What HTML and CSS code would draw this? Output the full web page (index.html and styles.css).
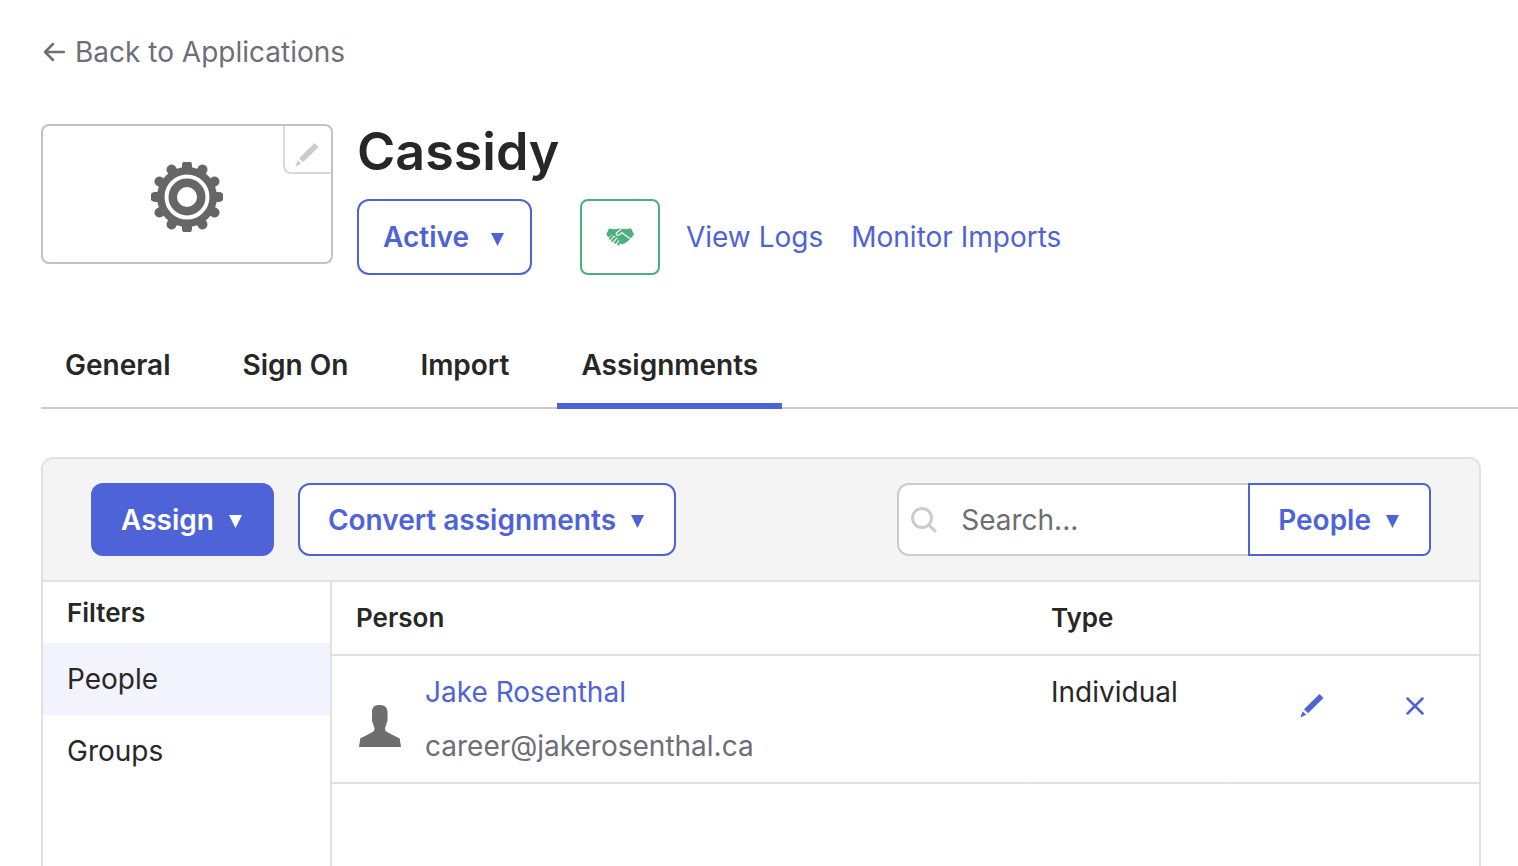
FILE: index.html
```html
<!DOCTYPE html>
<html lang="en">
<head>
<meta charset="utf-8">
<title>Cassidy – Assignments</title>
<link rel="stylesheet" href="styles.css">
</head>
<body>
<svg class="sprite" aria-hidden="true">
  <symbol id="caret" viewBox="0 0 14 14"><path d="M0 0h14L7 14z"/></symbol>
  <symbol id="pencil" viewBox="0 0 24 24"><path d="M19.500 0 23.500 4 8 19.300 4 15.300zM2.600 17.200l3.600 3.600L.4 23.400z"/></symbol>
</svg>
<main class="page">
  <a class="back" href="#">
    <svg class="back-icon" viewBox="0 0 22 20" aria-hidden="true"><path d="M21 10H2M10 2 2 10l8 8"/></svg>
    Back to Applications
  </a>

  <header class="app-header">
    <div class="logo">
      <svg class="gear" viewBox="-36 -35 72 70" aria-hidden="true">
        <circle r="30"/>
        <path class="teeth" d="M0-32V32M-32 0H32M-15.500-27.500 15.500 27.500M-27.500-15.500 27.500 15.500M-27.500 15.500 27.500-15.500M-15.500 27.500 15.500-27.500"/>
        <circle class="ring" r="20.500"/>
        <circle class="hole" r="10"/>
      </svg>
      <button class="logo-edit" type="button" aria-label="Edit logo"><svg class="pencil" aria-hidden="true"><use href="#pencil"/></svg></button>
    </div>
    <div class="app-info">
      <h1 class="title">Cassidy</h1>
      <div class="actions">
        <button class="btn btn-status" type="button">Active <svg class="caret" aria-hidden="true"><use href="#caret"/></svg></button>
        <button class="provision" type="button" aria-label="Provisioning">
          <svg class="handshake" viewBox="0 0 28 18" aria-hidden="true">
            <path d="M3 .5 8 1.300 14 .5l6 .8L25 .3l3 6.200-3 3.500c-.5 1.500-1.500 2-2.500 2-.3 1.500-1.300 2-2.500 2-.5 1.400-1.500 1.700-2.500 1.500-.7 1-1.800 1-2.500.5L12 11 8.500 8 5 7.500 2.500 9.500.2 6.500z"/>
            <path class="fingers" d="M5.800 8.600 4 10.700M8.800 9.800 6.300 12.900M11.500 11.800 9.200 14.700M14 13.800l-1.800 2.600"/>
            <path class="cut" d="M15.500.8 10.300 5c-.7 1.900 1.200 2.700 2.900 1.700L16 4.800l8.500 6.200"/>
          </svg>
        </button>
        <nav class="links">
          <a href="#">View Logs</a>
          <a href="#">Monitor Imports</a>
        </nav>
      </div>
    </div>
  </header>

  <nav class="tabs">
    <a class="tab" href="#">General</a>
    <a class="tab" href="#">Sign On</a>
    <a class="tab" href="#">Import</a>
    <a class="tab tab-active" href="#" aria-current="page">Assignments</a>
  </nav>

  <section class="panel">
    <div class="toolbar">
      <button class="btn btn-primary" type="button">Assign <svg class="caret" aria-hidden="true"><use href="#caret"/></svg></button>
      <button class="btn" type="button">Convert assignments <svg class="caret" aria-hidden="true"><use href="#caret"/></svg></button>
      <div class="search">
        <label class="search-box">
          <svg class="search-icon" viewBox="0 0 26 26" aria-hidden="true"><circle cx="11" cy="11" r="9.500"/><path d="m18 18 6 6"/></svg>
          <input class="search-input" type="text" placeholder="Search..." aria-label="Search">
        </label>
        <button class="btn btn-scope" type="button">People <svg class="caret" aria-hidden="true"><use href="#caret"/></svg></button>
      </div>
    </div>
    <div class="content">
      <aside class="filters">
        <h2 class="filters-title">Filters</h2>
        <a class="filter filter-active" href="#">People</a>
        <a class="filter" href="#">Groups</a>
      </aside>
      <div class="results">
        <table class="table">
          <colgroup><col><col class="col-type"><col class="col-actions"></colgroup>
          <thead>
            <tr><th scope="col">Person</th><th scope="col">Type</th><th></th></tr>
          </thead>
          <tbody>
            <tr>
              <td>
                <div class="person">
                  <svg class="avatar" viewBox="0 0 42 42" aria-hidden="true"><path d="M20.500 0c5.500 0 8.200 2.500 8 8v4.500c.4 1.500 0 4.500-1.200 6.500-.3 2.500-1.300 3-1.300 4.500 0 1.500.5 2.500 1.500 3.200L40.700 33.500 42 42H0l1.300-8.500L14 26.700c1-.7 1.500-1.700 1.500-3.200 0-1.500-1-2-1.300-4.500-1.200-2-1.600-5-1.200-6.500V8c-.2-5.500 2-8 7.500-8z"/></svg>
                  <div class="person-text">
                    <a href="#">Jake Rosenthal</a>
                    <span class="email">career@jakerosenthal.ca</span>
                  </div>
                </div>
              </td>
              <td>Individual</td>
              <td>
                <div class="row-actions">
                  <button class="icon-btn" type="button" aria-label="Edit"><svg class="pencil" aria-hidden="true"><use href="#pencil"/></svg></button>
                  <button class="icon-btn" type="button" aria-label="Remove"><svg class="cross" viewBox="0 0 18 18" aria-hidden="true"><path d="m1.500 1.500 15 15M16.500 1.500l-15 15"/></svg></button>
                </div>
              </td>
            </tr>
          </tbody>
        </table>
      </div>
    </div>
  </section>
</main>
</body>
</html>
```
FILE: styles.css
```css
:root {
  --blue: #4f63d9;
  --green: #4cb07c;
  --text: #272727;
  --muted: #6e6e78;
  --line: #e1e1e1;
}

* { box-sizing: border-box; }

body {
  margin: 0;
  background: #fff;
  color: var(--text);
  font: 400 28px/36px Inter, "Liberation Sans", sans-serif;
}

a { color: var(--blue); text-decoration: none; }
button { font: inherit; cursor: pointer; }
svg { display: block; flex: none; }
.sprite { display: none; }

.page {
  display: flex;
  flex-direction: column;
  min-height: 100vh;
  padding: 34px 0 0 41px;
}

.back {
  display: flex;
  align-items: center;
  align-self: flex-start;
  gap: 10px;
  padding-left: 2px;
  color: var(--muted);
}
.back-icon {
  width: 22px;
  height: 20px;
  fill: none;
  stroke: currentColor;
  stroke-width: 2.5;
  stroke-linecap: round;
  stroke-linejoin: round;
}

.app-header { display: flex; gap: 24px; margin-top: 54px; }

.logo {
  position: relative;
  display: grid;
  place-items: center;
  width: 292px;
  height: 140px;
  padding-top: 6px;
  border: 2px solid #c1c1c8;
  border-radius: 8px;
}
.gear { width: 72px; height: 70px; fill: #666; }
.teeth { stroke: #666; stroke-width: 10; stroke-linecap: round; }
.ring { fill: none; stroke: #fff; stroke-width: 4; }
.hole { fill: #fff; }
.logo-edit {
  position: absolute;
  top: 0;
  right: 0;
  display: grid;
  align-content: start;
  width: 48px;
  height: 48px;
  padding: 17px 0 0 10px;
  border: solid #d7d7dc;
  border-width: 0 0 2px 2px;
  border-radius: 0 0 0 8px;
  background: none;
  color: #cbcbcb;
}
.pencil { width: 24px; height: 24px; fill: currentColor; }

.title { margin: 0; font-size: 52px; font-weight: 600; line-height: 56px; }
.actions { display: flex; align-items: center; margin-top: 19px; }

.btn {
  display: flex;
  align-items: center;
  gap: 15px;
  height: 73px;
  padding: 0 30px 0 28px;
  border: 2px solid var(--blue);
  border-radius: 12px;
  background: #fff;
  color: var(--blue);
  font-weight: 600;
}
.btn-status { gap: 22px; height: 76px; padding: 0 26px 0 24px; }
.btn-primary { background: var(--blue); color: #fff; }
.caret { width: 13px; height: 13px; margin-top: 4px; fill: currentColor; }

.provision {
  display: grid;
  place-items: center;
  width: 80px;
  height: 76px;
  margin-left: 48px;
  padding: 0;
  border: 2px solid var(--green);
  border-radius: 8px;
  background: #fff;
}
.handshake { width: 28px; height: 18px; fill: var(--green); }
.fingers { fill: none; stroke: var(--green); stroke-width: 2.2; stroke-linecap: round; }
.cut { fill: none; stroke: #fff; stroke-width: 1.2; }
.links { display: flex; gap: 28px; margin-left: 26px; }

.tabs {
  display: flex;
  gap: 24px;
  margin-top: 60px;
  border-bottom: 2px solid #cbcbcb;
}
.tab {
  margin-bottom: -2px;
  padding: 12px 24px 20px;
  border-bottom: 6px solid transparent;
  color: var(--text);
  font-weight: 600;
}
.tab-active { border-color: var(--blue); }

.panel {
  display: flex;
  flex: 1;
  flex-direction: column;
  margin: 48px 37px 0 0;
  border: 2px solid var(--line);
  border-bottom: 0;
  border-radius: 12px 12px 0 0;
}
.toolbar {
  display: flex;
  gap: 24px;
  padding: 24px 48px;
  border-bottom: 2px solid var(--line);
  border-radius: 10px 10px 0 0;
  background: #f4f4f4;
}
.search { display: flex; margin-left: auto; }
.search-box {
  display: flex;
  align-items: center;
  gap: 24px;
  width: 351px;
  padding-left: 12px;
  border: 2px solid #cbcbcb;
  border-right: 0;
  border-radius: 12px 0 0 12px;
  background: #fff;
}
.search-icon { width: 26px; height: 26px; fill: none; stroke: #cbcbcb; stroke-width: 3; stroke-linecap: round; }
.search-input {
  flex: 1;
  min-width: 0;
  padding: 0;
  border: 0;
  outline: 0;
  background: none;
  color: var(--text);
  font: inherit;
}
.search-input::placeholder { color: #6e6e6e; opacity: 1; }
.btn-scope { border-radius: 0 8px 8px 0; }

.content { display: flex; flex: 1; }
.filters { flex: none; width: 289px; border-right: 2px solid var(--line); }
.filters-title { margin: 0; padding: 13px 24px 12px; font-size: 26px; font-weight: 600; line-height: 36px; }
.filter { display: block; padding: 18px 24px; color: var(--text); }
.filter-active { background: #f3f3fd; }

.results { flex: 1; }
.table { width: 100%; border-spacing: 0; table-layout: fixed; }
.col-type { width: 200px; }
.col-actions { width: 252px; }
th {
  padding: 18px 24px;
  border-bottom: 2px solid var(--line);
  font-size: 26px;
  font-weight: 600;
  text-align: left;
}
td {
  padding: 18px 24px;
  border-right: 1px solid transparent;
  border-bottom: 2px solid var(--line);
  vertical-align: top;
}
td:last-child { border-right: 0; }
.person { display: flex; align-items: flex-end; gap: 24px; }
.avatar { width: 42px; height: 42px; margin: 0 0 17px 3px; fill: #6e6e6e; }
.person-text { display: grid; gap: 18px; }
.email { color: var(--muted); }
.row-actions { display: flex; justify-content: space-between; padding: 20px 28px 0 49px; }
.icon-btn {
  display: grid;
  place-items: center;
  width: 24px;
  height: 24px;
  padding: 0;
  border: 0;
  background: none;
  color: var(--blue);
}
.cross { width: 18px; height: 18px; stroke: currentColor; stroke-width: 2.5; stroke-linecap: round; }
```
